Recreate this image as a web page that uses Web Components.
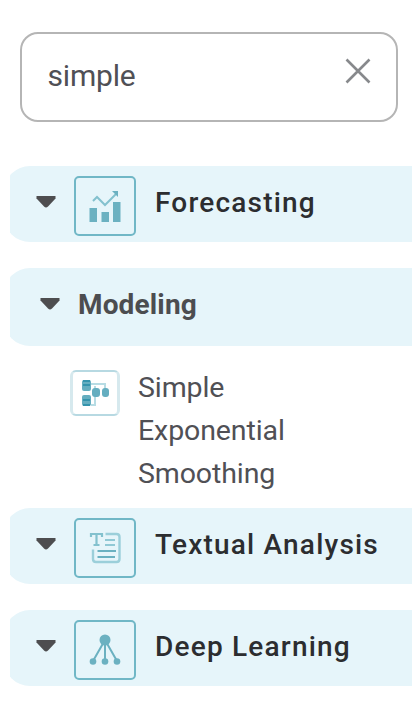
<!DOCTYPE html>
<html lang="en">
<head>
<meta charset="utf-8">
<title>Recipes</title>
<style>
    body {
        margin: 0;
        background: #fff;
        font-family: Roboto, "Liberation Sans", sans-serif;
        font-size: 28px;
        color: #505055;
    }
</style>
</head>
<body>
<recipe-panel>
    <search-box slot="search" value="simple"></search-box>
    <tree-group icon="chart">Forecasting</tree-group>
    <tree-group class="sub">Modeling</tree-group>
    <tree-leaf>Simple Exponential Smoothing</tree-leaf>
    <tree-group icon="text">Textual Analysis</tree-group>
    <tree-group icon="network">Deep Learning</tree-group>
</recipe-panel>

<script>
const icons = {
    chart: `
        <svg width="34" height="34" viewBox="0 0 34 34" fill="#6bb1c1">
            <path d="M1.500 19h7.500v14H1.500zM13.500 23h7.500v10h-7.500zM25 13h7.500v20H25z"/>
            <path d="M5 12L9 8l8 8L28 5" fill="none" stroke="#83c1ce" stroke-width="2"/>
            <path d="M24 2h6v6z"/>
        </svg>`,
    text: `
        <svg width="34" height="34" viewBox="0 0 34 34" fill="none" stroke="#91c9d5" stroke-width="2">
            <path d="M3 6V3h11v3M8.500 3v11M5.500 14h6" stroke-width="2.200" stroke="#83c1ce"/>
            <path d="M17.500 3h11q3 0 3 3v22q0 3-3 3H8q-3 0-3-3V18.500" stroke-width="2.400" stroke="#9bcfda"/>
            <path d="M17 9h10M17 14h10"/>
            <path d="M9.500 20H28M9.500 26H27" stroke="#6bb1c1"/>
        </svg>`,
    network: `
        <svg width="34" height="34" viewBox="0 0 34 34" fill="#6bb1c1">
            <path d="M17 7L5 28M17 7v21M17 7l12 21" stroke="#6bb1c1" stroke-width="2"/>
            <circle cx="17" cy="7" r="5.500"/>
            <circle cx="5" cy="28.500" r="3.300"/>
            <circle cx="17" cy="28.500" r="3.300"/>
            <circle cx="29" cy="28.500" r="3.300"/>
        </svg>`
};

class RecipePanel extends HTMLElement {
    constructor() {
        super();
        this.attachShadow({mode: 'open'}).innerHTML = `
            <style>
            :host {
                display: flex;
                flex-direction: column;
                box-sizing: border-box;
                height: 704px;
                padding-top: 32px;
            }

            .search {
                margin: 0 20px 44px;
            }

            .tree {
                margin: 0 6px 0 10px;
            }
            </style>
            <div class="search"><slot name="search"></slot></div>
            <div class="tree"><slot></slot></div>
        `;
    }
}

class SearchBox extends HTMLElement {
    constructor() {
        super();
        this.attachShadow({mode: 'open'});
    }

    connectedCallback() {
        this.shadowRoot.innerHTML = `
            <style>
            :host {
                display: flex;
                justify-content: space-between;
                box-sizing: border-box;
                height: 90px;
                padding: 23px 25px 0 25.500px;
                border: 2px solid #b5b5b5;
                border-radius: 18px;
            }

            span {
                font-size: 30px;
                line-height: 38px;
                letter-spacing: -0.2px;
            }

            svg {
                margin-top: 1px;
            }
            </style>
            <span>${this.getAttribute('value')}</span>
            <svg width="26" height="26" viewBox="0 0 26 26" fill="none" stroke="#87898c" stroke-width="2.600">
                <path d="M1.500 1.500l23 23M24.500 1.500l-23 23"/>
            </svg>
        `;
    }
}

class TreeGroup extends HTMLElement {
    constructor() {
        super();
        this.attachShadow({mode: 'open'});
    }

    connectedCallback() {
        const icon = icons[this.getAttribute('icon')];
        this.shadowRoot.innerHTML = `
            <style>
            :host {
                display: block;
                overflow: hidden;
                margin-bottom: 26px;
                color: #2c2d30;
                font-weight: 500;
                letter-spacing: 1.2px;
            }

            :host(.sub) {
                margin-bottom: 24px;
                color: #4c4d50;
                font-weight: 700;
                letter-spacing: 0.15px;
            }

            /* the round corners run under the left edge of the list */
            .bar {
                display: flex;
                align-items: flex-start;
                height: 76px;
                margin-left: -6px;
                padding-left: 32px;
                border-radius: 26px 0 0 26px;
                background: #e6f5fa;
            }

            :host(.sub) .bar {
                height: 78px;
                padding-left: 36px;
            }

            .caret {
                margin: 29px 18px 0 0;
            }

            .icon {
                display: flex;
                align-items: center;
                justify-content: center;
                box-sizing: border-box;
                width: 62px;
                height: 60px;
                margin: 10px 19px 0 0;
                border: 2px solid #70b7c6;
                border-radius: 5px;
            }

            .label {
                line-height: 36px;
                margin-top: 19px;
                white-space: nowrap;
            }
            </style>
            <div class="bar">
                <svg class="caret" width="20" height="13" viewBox="0 0 20 13" fill="#4d4d4f">
                    <path d="M0.500 1h19v2.500l-7.500 8q-2 2-4 0L0.500 3.500z"/>
                </svg>
                ${icon ? `<div class="icon">${icon}</div>` : ''}
                <div class="label"><slot></slot></div>
            </div>
        `;
    }
}

class TreeLeaf extends HTMLElement {
    constructor() {
        super();
        this.attachShadow({mode: 'open'}).innerHTML = `
            <style>
            :host {
                display: flex;
                align-items: flex-start;
                height: 138px;
                padding-left: 60px;
            }

            .icon {
                display: flex;
                box-sizing: border-box;
                width: 50px;
                height: 46px;
                margin-right: 18px;
                padding: 8px 0 0 9px;
                border: 2px solid #b7d9e2;
                border-left: 3px solid #d6e9ee;
                border-right: 3px solid #d6e9ee;
                border-radius: 6px;
            }

            .label {
                width: 160px;
                margin-top: -3px;
                font-size: 28.500px;
                line-height: 42.800px;
                letter-spacing: -0.1px;
            }
            </style>
            <div class="icon">
                <svg width="29" height="28" viewBox="0 0 29 28">
                    <path d="M9 4h14v6M13 6v19H9" fill="none" stroke="#b7dce4" stroke-width="2"/>
                    <g fill="#65aec0">
                        <rect y="0" width="9" height="11" rx="2"/>
                        <rect y="15" width="9" height="11" rx="2"/>
                        <rect x="10" y="8" width="8" height="9" rx="3"/>
                        <rect x="20" y="8" width="7" height="9" rx="3"/>
                    </g>
                    <path d="M1 1h7M1 5h7M1 20h7M1 25h7" stroke="#3594ad" stroke-width="2"/>
                </svg>
            </div>
            <div class="label"><slot></slot></div>
        `;
    }
}

customElements.define('recipe-panel', RecipePanel);
customElements.define('search-box', SearchBox);
customElements.define('tree-group', TreeGroup);
customElements.define('tree-leaf', TreeLeaf);
</script>
</body>
</html>
